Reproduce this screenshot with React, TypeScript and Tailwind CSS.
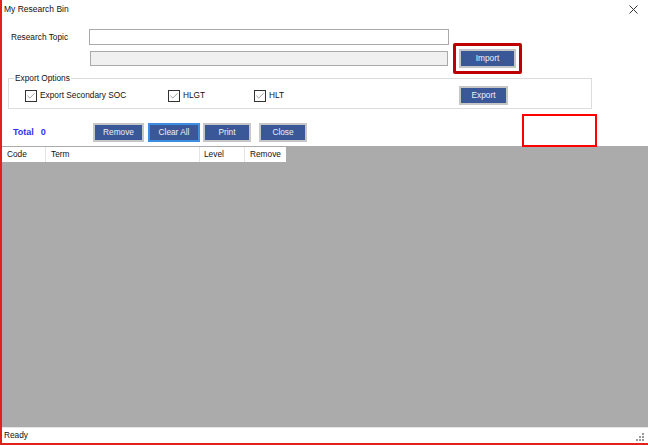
import { Check } from "lucide-react"

const font = { fontFamily: '"Liberation Sans", Arial, sans-serif' }

const BlueButton = ({ label, width, focused }: { label: string; width: string; focused?: boolean }) => (
  <button
    className={`${width} h-[19px] flex items-center justify-center text-[8.3px] text-[#eef0f6] bg-[#3a5897] border-2 ${
      focused ? "border-[#3c8ee2]" : "border-[#c6c6c6]"
    }`}
  >
    {label}
  </button>
)

const CheckItem = ({ label, width }: { label: string; width: string }) => (
  <div className={`${width} flex items-center`}>
    <div className="w-[12px] h-[12px] border border-[#333] bg-white flex items-center justify-center">
      <Check className="w-[10px] h-[10px] text-[#666]" strokeWidth={1.5} />
    </div>
    <span className="ml-[3px] text-[8.3px] text-[#111]">{label}</span>
  </div>
)

export default function App() {
  return (
    <div
      style={font}
      className="relative w-[648px] h-[445px] bg-white border-l-2 border-b-2 border-[#e3211c] flex flex-col overflow-hidden"
    >
      {/* title bar */}
      <div className="h-[19px] flex items-center justify-between pl-[2px] pr-[10px] shrink-0">
        <span className="text-[8.5px] text-[#111]">My Research Bin</span>
        <svg width="9" height="9" viewBox="0 0 9 9">
          <path d="M0.5 0.5 L8.5 8.5 M8.5 0.5 L0.5 8.5" stroke="#333" strokeWidth="1" />
        </svg>
      </div>

      {/* research topic */}
      <div className="mt-[10px] flex items-start shrink-0">
        <div className="w-[87px] pl-[9px] h-[16px] flex items-center text-[8.3px] text-[#111]">Research Topic</div>
        <div className="flex flex-col gap-[6px]">
          <div className="w-[360px] h-[16px] border border-[#a9a9a9] bg-white" />
          <div className="ml-[1px] w-[358px] h-[15px] border border-[#a9a9a9] bg-[#f0f0f0]" />
        </div>
        <div className="ml-[4px] mt-[14px] w-[69px] h-[31px] border-[3px] border-[#c00000] rounded-[2px] flex items-center justify-center">
          <BlueButton label="Import" width="w-[57px]" />
        </div>
      </div>

      {/* export options */}
      <div className="relative mt-[4px] ml-[6px] w-[584px] h-[31px] border border-[#dcdcdc] shrink-0 flex items-center pl-[16px] pt-[4px]">
        <span className="absolute left-[5px] top-[-6px] bg-white px-[1px] text-[8.3px] text-[#111] leading-[10px]">
          Export Options
        </span>
        <CheckItem label="Export Secondary SOC" width="w-[143px]" />
        <CheckItem label="HLGT" width="w-[86px]" />
        <CheckItem label="HLT" width="w-[205px]" />
        <BlueButton label="Export" width="w-[49px]" />
      </div>

      {/* total + actions */}
      <div className="mt-[14px] mb-[4px] h-[19px] flex items-center shrink-0">
        <div className="w-[91px] pl-[11px] text-[9px] font-bold text-[#2f2ff0]">
          Total<span className="ml-[7px]">0</span>
        </div>
        <BlueButton label="Remove" width="w-[51px]" />
        <div className="w-[4px]" />
        <BlueButton label="Clear All" width="w-[52px]" focused />
        <div className="w-[3px]" />
        <BlueButton label="Print" width="w-[48px]" />
        <div className="w-[8px]" />
        <BlueButton label="Close" width="w-[48px]" />
      </div>

      {/* grid */}
      <div className="flex-1 bg-[#ababab] pt-[1px]">
        <div className="flex w-fit gap-[1px] bg-[#e4e4e4] h-[15px] text-[8.3px] text-[#111]">
          <div className="w-[43px] bg-white pl-[5px] flex items-center">Code</div>
          <div className="w-[153px] bg-white pl-[5px] flex items-center">Term</div>
          <div className="w-[44px] bg-white pl-[4px] flex items-center">Level</div>
          <div className="w-[41px] bg-white pl-[5px] flex items-center">Remove</div>
        </div>
      </div>

      {/* status bar */}
      <div className="h-[16px] shrink-0 border-t border-[#e6e6e6] bg-white flex items-center justify-between pl-[2px] pr-[3px]">
        <span className="text-[8.3px] text-[#111]">Ready</span>
        <svg width="10" height="10" viewBox="0 0 10 10" className="mt-[3px]">
          <rect x="7" y="1" width="2" height="2" fill="#9a9a9a" />
          <rect x="4" y="4" width="2" height="2" fill="#9a9a9a" />
          <rect x="7" y="4" width="2" height="2" fill="#9a9a9a" />
          <rect x="1" y="7" width="2" height="2" fill="#9a9a9a" />
          <rect x="4" y="7" width="2" height="2" fill="#9a9a9a" />
          <rect x="7" y="7" width="2" height="2" fill="#9a9a9a" />
        </svg>
      </div>

      {/* annotation box */}
      <div className="absolute left-[520px] top-[114px] w-[75px] h-[33px] border-2 border-[#ff0000]" />
    </div>
  )
}
